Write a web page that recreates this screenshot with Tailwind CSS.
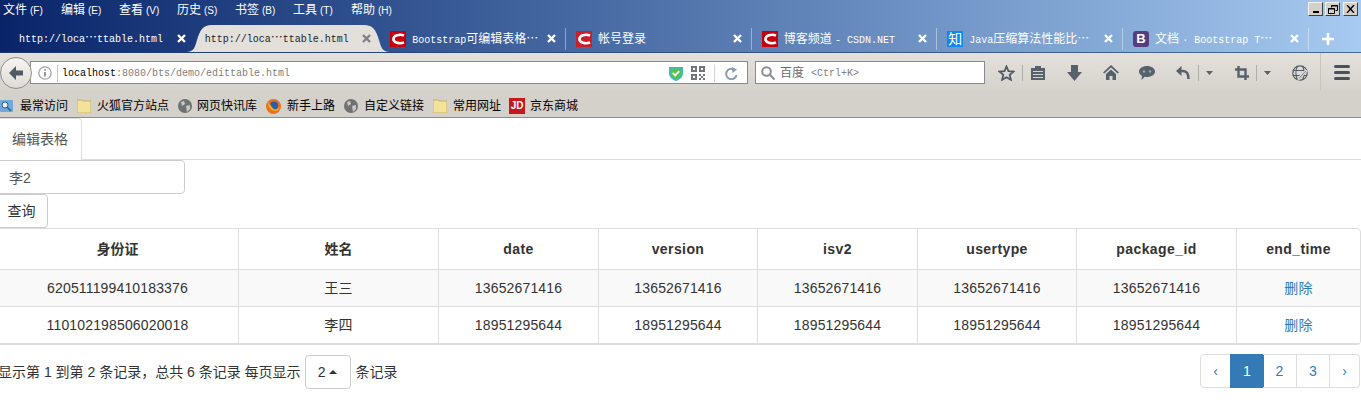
<!DOCTYPE html>
<html lang="zh-CN">
<head>
  <meta charset="UTF-8" />
  <title>编辑表格</title>
  <script src="https://cdn.jsdelivr.net/npm/@tailwindcss/browser@4"></script>
</head>
<body class="h-[412px] overflow-hidden bg-white text-[14px] text-[#333] font-['Liberation_Sans','Noto_Sans_CJK_SC',sans-serif]">

  <!-- 标题栏 + 标签栏 -->
  <header class="h-[53px] bg-linear-to-r from-[#0a246a] to-[#a6caf0] border-b border-[#24406f]/70 text-white text-[12px]">
    <div class="flex justify-between h-[25px]">
      <nav class="flex pl-[3px] h-[20px] items-center">
        <span class="w-[58px]">文件<span class="ml-[3px] text-[10px]">(F)</span></span>
        <span class="w-[58px]">编辑<span class="ml-[3px] text-[10px]">(E)</span></span>
        <span class="w-[58px]">查看<span class="ml-[3px] text-[10px]">(V)</span></span>
        <span class="w-[58px]">历史<span class="ml-[3px] text-[10px]">(S)</span></span>
        <span class="w-[58px]">书签<span class="ml-[3px] text-[10px]">(B)</span></span>
        <span class="w-[58px]">工具<span class="ml-[3px] text-[10px]">(T)</span></span>
        <span class="w-[58px]">帮助<span class="ml-[3px] text-[10px]">(H)</span></span>
      </nav>
      <div class="flex gap-[2px] pt-[2px] pr-[3px] h-[17px]">
        <div class="w-[15px] h-[14px] bg-[#d4d0c8] border border-[#f4f2ee] border-r-[#404040] border-b-[#404040] flex items-end justify-center pb-[2px]"><span class="w-[6px] h-[2px] bg-black"></span></div>
        <div class="w-[15px] h-[14px] bg-[#d4d0c8] border border-[#f4f2ee] border-r-[#404040] border-b-[#404040] flex items-center justify-center">
          <svg width="10" height="9" viewBox="0 0 10 9" fill="none" stroke="#000"><path d="M3.5 2.5V.5h6v5h-2M.5 3.5h6v5h-6z"/><path d="M3 1h7M0 4h7" stroke-width="1"/></svg>
        </div>
        <div class="ml-[1px] w-[15px] h-[14px] bg-[#d4d0c8] border border-[#f4f2ee] border-r-[#404040] border-b-[#404040] flex items-center justify-center">
          <svg width="9" height="8" viewBox="0 0 9 8" stroke="#000" stroke-width="1.4"><path d="M1 0l7 8M8 0L1 8"/></svg>
        </div>
      </div>
    </div>

    <div class="flex items-center h-[27px] pl-[9px]">
      <div class="flex items-center h-[22px] w-[185.67px] pl-[10px] pr-[9px]">
        <span class="flex-1 font-['Liberation_Mono','Noto_Sans_CJK_SC',monospace] text-[10px] whitespace-nowrap">http://loca<span class="text-[12px]">⋯</span>ttable.html</span>
        <svg width="9" height="9" viewBox="0 0 9 9" stroke="#fff" stroke-width="2.4"><path d="M1 1l7 7M8 1L1 8"/></svg>
      </div>
      <div class="relative flex items-center h-[22px] w-[185.67px] pl-[10px] pr-[9px] text-[#1c1c1c]">
        <svg class="absolute left-[-9px] top-[-3px]" width="204" height="27" viewBox="0 0 204 27"><path d="M0 27c8 0 9-5 11-12C14 5 17 0 26 0h152c9 0 12 5 15 15 2 7 3 12 11 12z" fill="#e3e0db"/></svg>
        <span class="relative flex-1 font-['Liberation_Mono','Noto_Sans_CJK_SC',monospace] text-[10px] whitespace-nowrap">http://loca<span class="text-[12px]">⋯</span>ttable.html</span>
        <svg class="relative" width="9" height="9" viewBox="0 0 9 9" stroke="#7d8288" stroke-width="2.4"><path d="M1 1l7 7M8 1L1 8"/></svg>
      </div>
      <div class="flex items-center h-[22px] w-[185.67px] pl-[10px] pr-[9px] border-r border-white/40">
        <svg class="mr-[6px] shrink-0" width="16" height="16" viewBox="0 0 16 16"><rect width="16" height="16" fill="#c7000b"/><path d="M14 4.6C12 3.6 9.5 3.4 7 4.2 4.5 5 3.4 6.6 3.4 8c0 1.400 1.100 3 3.600 3.800 2.500.8 5 .6 7-.4" fill="none" stroke="#fff" stroke-width="2.6"/></svg>
        <span class="flex-1 whitespace-nowrap overflow-hidden"><span class="font-['Liberation_Mono',monospace] text-[10px]">Bootstrap</span>可编辑表格⋯</span>
        <svg class="shrink-0" width="9" height="9" viewBox="0 0 9 9" stroke="#fff" stroke-width="2.4"><path d="M1 1l7 7M8 1L1 8"/></svg>
      </div>
      <div class="flex items-center h-[22px] w-[185.67px] pl-[10px] pr-[9px] border-r border-white/40">
        <svg class="mr-[6px] shrink-0" width="16" height="16" viewBox="0 0 16 16"><rect width="16" height="16" fill="#c7202b"/><path d="M14 4.6C12 3.6 9.5 3.4 7 4.2 4.500 5 3.400 6.600 3.400 8c0 1.400 1.100 3 3.600 3.800 2.500.8 5 .6 7-.4" fill="none" stroke="#fff" stroke-width="2.600"/></svg>
        <span class="flex-1 whitespace-nowrap">帐号登录</span>
        <svg class="shrink-0" width="9" height="9" viewBox="0 0 9 9" stroke="#fff" stroke-width="2.4"><path d="M1 1l7 7M8 1L1 8"/></svg>
      </div>
      <div class="flex items-center h-[22px] w-[185.67px] pl-[10px] pr-[9px] border-r border-white/40">
        <svg class="mr-[6px] shrink-0" width="16" height="16" viewBox="0 0 16 16"><rect width="16" height="16" fill="#c7000b"/><path d="M14 4.600C12 3.600 9.500 3.400 7 4.200 4.500 5 3.400 6.600 3.400 8c0 1.400 1.100 3 3.600 3.800 2.500.8 5 .6 7-.4" fill="none" stroke="#fff" stroke-width="2.600"/></svg>
        <span class="flex-1 whitespace-nowrap">博客频道 <span class="font-['Liberation_Mono',monospace] text-[10px]">- CSDN.NET</span></span>
        <svg class="shrink-0" width="9" height="9" viewBox="0 0 9 9" stroke="#fff" stroke-width="2.4"><path d="M1 1l7 7M8 1L1 8"/></svg>
      </div>
      <div class="flex items-center h-[22px] w-[185.67px] pl-[10px] pr-[9px] border-r border-white/40">
        <span class="mr-[6px] shrink-0 w-[16px] h-[16px] bg-[#0e88eb] text-center leading-[16px] text-[14px]">知</span>
        <span class="flex-1 whitespace-nowrap overflow-hidden"><span class="font-['Liberation_Mono',monospace] text-[10px]">Java</span>压缩算法性能比⋯</span>
        <svg class="shrink-0" width="9" height="9" viewBox="0 0 9 9" stroke="#fff" stroke-width="2.4"><path d="M1 1l7 7M8 1L1 8"/></svg>
      </div>
      <div class="flex items-center h-[22px] w-[185.67px] pl-[10px] pr-[9px] border-r border-white/40">
        <span class="mr-[6px] shrink-0 w-[16px] h-[16px] rounded-[3px] bg-[#563d7c] text-center leading-[16px] text-[13px] font-bold">B</span>
        <span class="flex-1 whitespace-nowrap overflow-hidden">文档 <span class="font-['Liberation_Mono',monospace] text-[10px]">· Bootstrap T</span>⋯</span>
        <svg class="shrink-0" width="9" height="9" viewBox="0 0 9 9" stroke="#fff" stroke-width="2.4"><path d="M1 1l7 7M8 1L1 8"/></svg>
      </div>
      <svg class="ml-[13px]" width="12" height="12" viewBox="0 0 12 12" stroke="#fff" stroke-width="2.6"><path d="M6 0v12M0 6h12"/></svg>
    </div>
  </header>

  <!-- 地址栏 -->
  <div class="flex h-[37px] bg-linear-to-b from-[#e4e1dc] to-[#d6d3cd] text-[12px]">
    <div class="relative z-10 mt-[4px] shrink-0 w-[32px] h-[32px] rounded-full border border-[#8f8f8f] bg-linear-to-b from-[#f6f5f2] to-[#dedbd5] flex items-center justify-center">
      <svg width="14" height="14" viewBox="0 0 14 14" fill="#4f5a66"><path d="M7 0L0 7l7 7V9.500h7v-5H7z"/></svg>
    </div>
    <div class="mt-[8px] -ml-[2px] w-[718px] h-[23px] pt-[1px] flex items-center bg-white border border-[#8a8a8a]">
      <svg class="ml-[7px]" width="14" height="14" viewBox="0 0 14 14" fill="none"><circle cx="7" cy="7" r="6.200" stroke="#a3a3a3" stroke-width="1.300"/><path d="M7 6v4.500M7 3.200v1.600" stroke="#8e8e8e" stroke-width="1.800"/></svg>
      <span class="ml-[5px] w-px h-[17px] bg-[#c4c4c4]"></span>
      <span class="ml-[4px] pt-[1px] flex-1 font-['Liberation_Mono',monospace] text-[10px] text-[#808080]"><span class="text-black">localhost</span>:8080/bts/demo/edittable.html</span>
      <svg width="14" height="15" viewBox="0 0 14 15"><path d="M0 1h14v6c0 4-3 6.500-7 8-4-1.500-7-4-7-8z" fill="#38b6d8"/><path d="M1.500 2.500h11V7c0 3-2.500 5-5.500 6.200C4 12 1.500 10 1.500 7z" fill="#59c14f"/><path d="M3.800 7l2.400 2.400 4-4.200" fill="none" stroke="#fff" stroke-width="1.800"/></svg>
      <svg class="ml-[8px]" width="14" height="14" viewBox="0 0 14 14" fill="#70757a"><path d="M0 0h6v6H0zM8 0h6v6H8zM0 8h6v6H0z"/><path d="M2 2h2v2H2zM10 2h2v2h-2zM2 10h2v2H2z" fill="#fff"/><path d="M8 8h2v2H8zM12 8h2v2h-2zM10 10h2v2h-2zM8 12h2v2H8zM12 12h2v2h-2z"/></svg>
      <span class="ml-[9px] w-px h-[17px] bg-[#d4d4d4]"></span>
      <svg class="ml-[10px] mr-[9px]" width="13" height="13" viewBox="0 0 13 13" fill="none" stroke="#8b9aa8" stroke-width="2"><path d="M11.500 8A5.200 5.200 0 1 1 8.500 2.200"/><path d="M7 0l5 2.500L7.500 6z" fill="#8b9aa8" stroke="none"/></svg>
    </div>
    <div class="mt-[8px] ml-[7px] w-[230px] h-[23px] pt-[1px] flex items-center bg-white border border-[#8a8a8a]">
      <svg class="ml-[5px]" width="14" height="14" viewBox="0 0 14 14" fill="none" stroke="#8d8d8d" stroke-width="2"><circle cx="5.500" cy="5.500" r="4.300"/><path d="M8.800 8.800L13.500 13.500"/></svg>
      <span class="ml-[5px] text-[#6d6d6d]">百度</span>
      <span class="ml-[7px] font-['Liberation_Mono',monospace] text-[10px] text-[#808080]">&lt;Ctrl+K&gt;</span>
    </div>
    <div class="flex items-center h-[37px] pt-[2px]">
      <svg class="ml-[13px]" width="17" height="16" viewBox="0 0 17 16" fill="none" stroke="#4f5a66" stroke-width="1.800"><path d="M8.500 1.500l2 4.700 5 .4-3.800 3.300 1.200 4.900-4.400-2.600-4.400 2.600 1.200-4.900L1.500 6.600l5-.4z"/></svg>
      <span class="ml-[7px] w-px h-[16px] bg-[#b0aea9]"></span>
      <svg class="ml-[8px]" width="14" height="15" viewBox="0 0 14 15" fill="#56616c"><path d="M0 3h14v12H0zM4 1h6v3H4z"/><path d="M2 6h10v1H2zM2 9h10v1H2zM2 12h10v1H2z" fill="#d9d6d1"/></svg>
      <svg class="ml-[22px]" width="15" height="16" viewBox="0 0 15 16" fill="#56616c"><path d="M4 0h7v7h4l-7.500 9L0 7h4z"/></svg>
      <svg class="ml-[21px]" width="16" height="15" viewBox="0 0 16 15" fill="#56616c"><path d="M8 0l8 7.500-1.300 1L8 2.500 1.300 8.500 0 7.500z"/><path d="M3 9l5-4.500L13 9v6H9.500v-4h-3v4H3z"/></svg>
      <svg class="ml-[20px]" width="16" height="14" viewBox="0 0 16 14"><path d="M8 0c4.400 0 8 2.400 8 5.500S12.400 11 8 11c-.8 0-1.500 0-2.200-.2L2.500 14l.5-4.200C1.200 8.800 0 7.300 0 5.500 0 2.400 3.600 0 8 0z" fill="#56616c"/><circle cx="5" cy="5.500" r="1.300" fill="#9aa2a9"/><circle cx="11" cy="5.500" r="1.300" fill="#9aa2a9"/></svg>
      <svg class="ml-[21px]" width="14" height="14" viewBox="0 0 14 14" fill="none"><path d="M5.500 0L0 5l5.500 5z" fill="#56616c"/><path d="M4 5h3c4 0 5.500 3 5.500 8" stroke="#56616c" stroke-width="2.600"/></svg>
      <span class="ml-[8px] w-px h-[16px] bg-[#b0aea9]"></span>
      <svg class="ml-[7px]" width="7" height="4" viewBox="0 0 7 4" fill="#56616c"><path d="M0 0h7L3.500 4z"/></svg>
      <svg class="ml-[22px]" width="14" height="14" viewBox="0 0 14 14" fill="none" stroke="#56616c" stroke-width="2.400"><path d="M3.500 0v10.500H14M0 3.500h10.500V14"/></svg>
      <span class="ml-[7px] w-px h-[16px] bg-[#b0aea9]"></span>
      <svg class="ml-[7px]" width="7" height="4" viewBox="0 0 7 4" fill="#56616c"><path d="M0 0h7L3.500 4z"/></svg>
      <svg class="ml-[21px]" width="16" height="16" viewBox="0 0 16 16" fill="none" stroke="#4f5a66" stroke-width="1.200"><circle cx="8" cy="8" r="7.200"/><path d="M.8 5.500h14.400M.8 10.500h14.400M5.500 1c-2 4-2 10 0 14M10.500 1c2 4 2 10 0 14"/><path d="M15 6l-6.500 7-2.500 2 1-3 6.500-7z" fill="#4f5a66" stroke="#d8d5cf"/></svg>
      <span class="ml-[12px] -mt-[2px] w-px h-[37px] bg-[#c8c5bf]"></span>
      <div class="ml-[13px] w-[16px] flex flex-col gap-[3px]"><span class="h-[3px] rounded-sm bg-[#47525d]"></span><span class="h-[3px] rounded-sm bg-[#47525d]"></span><span class="h-[3px] rounded-sm bg-[#47525d]"></span></div>
    </div>
  </div>

  <!-- 书签栏 -->
  <div class="flex items-center h-[28px] pt-[5px] bg-[#d4d0ca] border-b border-[#8c8c8c] text-[12px] text-black whitespace-nowrap">
    <svg class="shrink-0" width="14" height="14" viewBox="0 0 14 14"><rect x="0" y="1" width="13" height="12" rx="1" fill="#6fa9da"/><circle cx="5" cy="6" r="3" fill="#e8f1f9" stroke="#2c5f94"/><path d="M7 8l4 4" stroke="#2c5f94" stroke-width="1.500"/></svg>
    <span class="ml-[6px]">最常访问</span>
    <svg class="ml-[9px] shrink-0" width="14" height="14" viewBox="0 0 14 14"><path d="M0 1h5l1 1h8v12H0z" fill="#f3e39a" stroke="#b9a65a" stroke-width=".8"/></svg>
    <span class="ml-[6px]">火狐官方站点</span>
    <svg class="ml-[9px] shrink-0" width="14" height="14" viewBox="0 0 14 14"><circle cx="7" cy="7" r="7" fill="#6f7173"/><path d="M3 3l3-1 1 3-3 2zM8 7l4-1 0 4-3 3z" fill="#c8c9ca"/></svg>
    <span class="ml-[5px]">网页快讯库</span>
    <svg class="ml-[9px] shrink-0" width="15" height="15" viewBox="0 0 15 15"><circle cx="7.500" cy="7.500" r="7.500" fill="#e8711c"/><circle cx="8" cy="6.500" r="4" fill="#2a5ea8"/><path d="M2 3c0 6 3 9 8 9 2 0 4-2 4-5-1 3-4 4-6 3-2-1-3-4-6-7z" fill="#f5a623"/></svg>
    <span class="ml-[6px]">新手上路</span>
    <svg class="ml-[9px] shrink-0" width="14" height="14" viewBox="0 0 14 14"><circle cx="7" cy="7" r="7" fill="#6f7173"/><path d="M3 3l3-1 1 3-3 2zM8 7l4-1 0 4-3 3z" fill="#c8c9ca"/></svg>
    <span class="ml-[6px]">自定义链接</span>
    <svg class="ml-[9px] shrink-0" width="14" height="14" viewBox="0 0 14 14"><path d="M0 1h5l1 1h8v12H0z" fill="#f3e39a" stroke="#b9a65a" stroke-width=".8"/></svg>
    <span class="ml-[6px]">常用网址</span>
    <span class="ml-[8px] shrink-0 w-[16px] h-[16px] bg-[#c8161d] text-white text-center text-[10px] leading-[16px] font-bold">JD</span>
    <span class="ml-[5px]">京东商城</span>
  </div>

  <!-- 页面内容 -->
  <main class="-ml-[4px] w-[1365px]">
    <div class="h-[42px] border-b border-[#ddd]">
      <a class="block w-[86px] h-[42px] pl-[15px] leading-[40px] whitespace-nowrap text-[#555] bg-white border border-[#ddd] border-b-white rounded-t-[4px]">编辑表格</a>
    </div>
    <input value="李2" class="block w-[189px] h-[34px] px-[12px] text-[14px] text-[#555] font-['Liberation_Sans','Noto_Sans_CJK_SC',sans-serif] border border-[#ccc] rounded-[4px]" />
    <button class="block -ml-[1px] w-[53px] h-[34px] text-center border border-[#ccc] rounded-[4px] bg-white">查询</button>

    <div class="border border-[#ddd] rounded-[4px] overflow-hidden">
      <table class="w-full table-fixed border-separate border-spacing-0 text-center">
        <thead>
          <tr class="h-[41px] font-bold">
            <th class="w-[242px] border-r border-b border-[#ddd]">身份证</th>
            <th class="w-[200px] border-r border-b border-[#ddd]">姓名</th>
            <th class="w-[160px] border-r border-b border-[#ddd] tracking-[0.4px]">date</th>
            <th class="w-[159px] border-r border-b border-[#ddd] tracking-[0.4px]">version</th>
            <th class="w-[160px] border-r border-b border-[#ddd] tracking-[0.4px]">isv2</th>
            <th class="w-[159px] border-r border-b border-[#ddd] tracking-[0.4px]">usertype</th>
            <th class="w-[160px] border-r border-b border-[#ddd] tracking-[0.4px]">package_id</th>
            <th class="border-b border-[#ddd] tracking-[0.4px]">end_time</th>
          </tr>
        </thead>
        <tbody class="tracking-[0.15px]">
          <tr class="h-[37px] bg-[#f9f9f9]">
            <td class="border-r border-b border-[#ddd]">620511199410183376</td>
            <td class="border-r border-b border-[#ddd]">王三</td>
            <td class="border-r border-b border-[#ddd]">13652671416</td>
            <td class="border-r border-b border-[#ddd]">13652671416</td>
            <td class="border-r border-b border-[#ddd]">13652671416</td>
            <td class="border-r border-b border-[#ddd]">13652671416</td>
            <td class="border-r border-b border-[#ddd]">13652671416</td>
            <td class="border-b border-[#ddd] text-[#337ab7]">删除</td>
          </tr>
          <tr class="h-[37px]">
            <td class="border-r border-b border-[#ddd]">110102198506020018</td>
            <td class="border-r border-b border-[#ddd]">李四</td>
            <td class="border-r border-b border-[#ddd]">18951295644</td>
            <td class="border-r border-b border-[#ddd]">18951295644</td>
            <td class="border-r border-b border-[#ddd]">18951295644</td>
            <td class="border-r border-b border-[#ddd]">18951295644</td>
            <td class="border-r border-b border-[#ddd]">18951295644</td>
            <td class="border-b border-[#ddd] text-[#337ab7]">删除</td>
          </tr>
        </tbody>
      </table>
    </div>

    <div class="flex justify-between items-start mt-[9px] pr-[1px]">
      <div class="flex items-center h-[34px] mt-[1px] pl-[2px] whitespace-nowrap">
        <span>显示第 1 到第 2 条记录，总共 6 条记录 每页显示</span>
        <button class="ml-[4px] w-[46px] h-[34px] flex items-center justify-center gap-[4px] border border-[#ccc] rounded-[4px] bg-white">2<svg width="8" height="4" viewBox="0 0 8 4" fill="#333"><path d="M4 0l4 4H0z"/></svg></button>
        <span class="ml-[5px]">条记录</span>
      </div>
      <nav class="flex h-[34px] text-[#337ab7] text-center leading-[32px]">
        <a class="w-[31px] border border-[#ddd] rounded-l-[4px]">‹</a>
        <a class="w-[34px] -ml-px bg-[#337ab7] text-white border border-[#337ab7]">1</a>
        <a class="w-[34px] -ml-px border border-[#ddd] border-l-0">2</a>
        <a class="w-[33px] border border-[#ddd] border-l-0">3</a>
        <a class="w-[30px] border border-[#ddd] border-l-0 rounded-r-[4px]">›</a>
      </nav>
    </div>
  </main>
</body>
</html>
